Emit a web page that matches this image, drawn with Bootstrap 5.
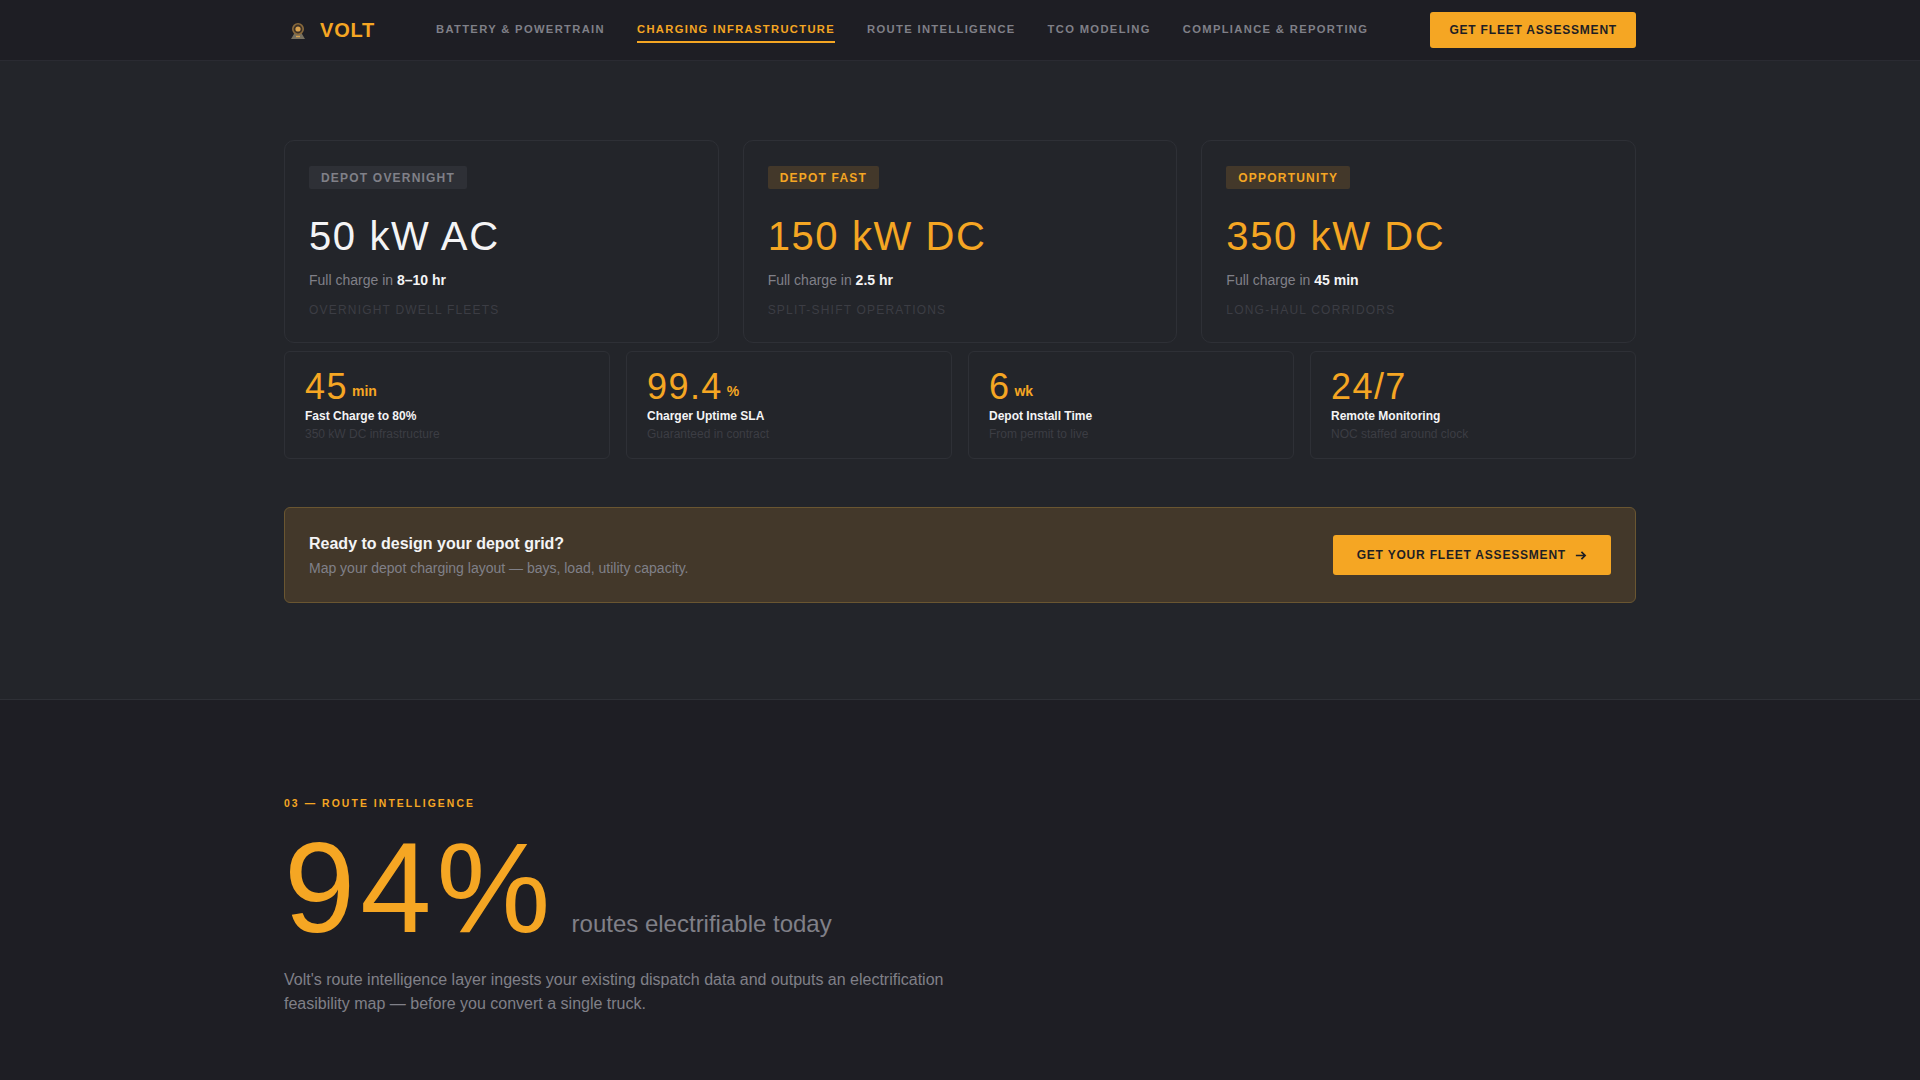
<!DOCTYPE html>
<html lang="en">
<head>
  <meta charset="UTF-8" />
  <meta name="viewport" content="width=device-width, initial-scale=1.0"/>
  <title>Volt</title>
  <link href="https://cdn.jsdelivr.net/npm/bootstrap@5.3.2/dist/css/bootstrap.min.css" rel="stylesheet" />
  <style>
    body {
      background: #1e1e24;
      font-family: "Liberation Sans", Arial, sans-serif;
      color: #fff;
    }
    .wrap {
      max-width: 1400px;
      margin: 0 auto;
      padding: 0 24px;
    }
    .topbar {
      height: 61px;
      background: #1e1e24;
      border-bottom: 1px solid #2a2b32;
    }
    .brand {
      width: 152px;
      color: #f5a623;
      font-size: 20px;
      font-weight: 700;
      letter-spacing: .8px;
      gap: 12px;
      padding-left: 4px;
    }
    .menu-link {
      color: #808088;
      font-size: 11.2px;
      font-weight: 700;
      letter-spacing: 1.344px;
      text-decoration: none;
      text-transform: uppercase;
      padding: 4px 0;
      border-bottom: 2px solid transparent;
    }
    .menu-link.on {
      color: #f5a623;
      border-bottom-color: #f5a623;
    }
    .top-links { gap: 32px; }
    .amber-btn {
      background: #f5a623;
      color: #1e1e24;
      font-weight: 700;
      font-size: 12px;
      line-height: 18px;
      letter-spacing: .8px;
      text-transform: uppercase;
      border: 0;
      border-radius: 3px;
    }
    .amber-btn:hover { background: #f5a623; color: #1e1e24; }
    .top-cta { padding: 9px 19px; }
    .strip-cta { padding: 11px 24px; }
    .charging-band {
      background: #23252a;
      border-bottom: 1px solid #2e3036;
      padding: 79px 0 96px;
    }
    .tier-grid {
      display: grid;
      grid-template-columns: repeat(3, 1fr);
      gap: 24px;
      margin-bottom: 8px;
    }
    .tier-card {
      border: 1px solid #2e3036;
      border-radius: 10px;
      padding: 25px 24px 24px;
      height: 203px;
    }
    .tier-tag {
      display: block;
      width: fit-content;
      font-size: 12px;
      line-height: 15px;
      font-weight: 700;
      letter-spacing: 1.2px;
      text-transform: uppercase;
      padding: 5px 12px 3px;
      border-radius: 2px;
      background: #2e3036;
      color: #808088;
    }
    .tier-tag.hot {
      background: #43382a;
      color: #f5a623;
    }
    .tier-power {
      font-size: 40px;
      line-height: 48px;
      letter-spacing: 1.6px;
      margin: 23px 0 10px;
      color: #f4f4f5;
    }
    .tier-power.hot { color: #f5a623; }
    .tier-time {
      font-size: 14px;
      line-height: 21px;
      color: #808088;
    }
    .tier-time b { color: #f4f4f5; }
    .tier-use {
      font-size: 12px;
      letter-spacing: 1.2px;
      text-transform: uppercase;
      color: #3c3d44;
      margin-top: 10px;
    }
    .stat-grid {
      display: grid;
      grid-template-columns: repeat(4, 1fr);
      gap: 16px;
    }
    .stat-box {
      border: 1px solid #2e3036;
      border-radius: 6px;
      padding: 15px 20px 0;
      height: 108px;
    }
    .stat-num {
      color: #f5a623;
      font-size: 36px;
      line-height: 39px;
      letter-spacing: 1.44px;
      margin-bottom: 1px;
    }
    .stat-unit {
      font-size: 14px;
      line-height: 1;
      font-weight: 700;
      letter-spacing: 0;
      margin-left: 4px;
      vertical-align: 3px;
    }
    .stat-name {
      font-size: 12px;
      line-height: 18px;
      font-weight: 700;
      color: #f4f4f5;
    }
    .stat-note {
      font-size: 12px;
      line-height: 18px;
      color: #3c3d44;
    }
    .cta-strip {
      margin-top: 48px;
      height: 96px;
      background: #43382a;
      border: 1px solid #6a5631;
      border-radius: 6px;
      padding: 0 24px;
    }
    .cta-title {
      font-size: 16px;
      font-weight: 700;
      line-height: 24px;
      color: #f4f4f5;
    }
    .cta-sub {
      font-size: 14px;
      line-height: 21px;
      margin-top: 2px;
      color: #808088;
    }
    .route-band {
      padding: 96px 0;
    }
    .eyebrow {
      color: #f5a623;
      font-size: 10.4px;
      font-weight: 700;
      letter-spacing: 2.08px;
      text-transform: uppercase;
      line-height: 15px;
      margin-bottom: 13px;
    }
    .big-num {
      color: #f5a623;
      font-size: 128px;
      line-height: 128px;
      letter-spacing: 5.12px;
    }
    .big-note {
      color: #808088;
      font-size: 24px;
    }
    .big-row { gap: 16px; }
    .route-copy {
      max-width: 680px;
      color: #808088;
      font-size: 16px;
      line-height: 24px;
      margin-top: 16px;
    }
  </style>
</head>
<body>
  <header class="topbar">
    <div class="wrap d-flex align-items-center h-100">
      <div class="brand d-flex align-items-center">
        <svg width="20" height="20" viewBox="0 0 20 20" aria-hidden="true">
          <path d="M6 14h8l3 5H3z" fill="#77705f"/>
          <circle cx="10" cy="9" r="6" fill="#8a6a3c"/>
          <circle cx="10" cy="9" r="4.4" fill="#3b3128"/>
          <circle cx="10" cy="9" r="2.6" fill="#d9a24e"/>
          <path d="M8 16.5h4" stroke="#d9a24e" stroke-width="1.4"/>
        </svg>
        <span>VOLT</span>
      </div>
      <nav class="d-flex align-items-center top-links flex-grow-1">
        <a class="menu-link" href="#">Battery &amp; Powertrain</a>
        <a class="menu-link on" href="#">Charging Infrastructure</a>
        <a class="menu-link" href="#">Route Intelligence</a>
        <a class="menu-link" href="#">TCO Modeling</a>
        <a class="menu-link" href="#">Compliance &amp; Reporting</a>
      </nav>
      <a class="btn amber-btn top-cta" href="#">Get Fleet Assessment</a>
    </div>
  </header>

  <section class="charging-band">
    <div class="wrap">
      <div class="tier-grid">
        <div class="tier-card">
          <span class="tier-tag">Depot Overnight</span>
          <div class="tier-power">50 kW AC</div>
          <div class="tier-time">Full charge in <b>8–10 hr</b></div>
          <div class="tier-use">Overnight dwell fleets</div>
        </div>
        <div class="tier-card">
          <span class="tier-tag hot">Depot Fast</span>
          <div class="tier-power hot">150 kW DC</div>
          <div class="tier-time">Full charge in <b>2.5 hr</b></div>
          <div class="tier-use">Split-shift operations</div>
        </div>
        <div class="tier-card">
          <span class="tier-tag hot">Opportunity</span>
          <div class="tier-power hot">350 kW DC</div>
          <div class="tier-time">Full charge in <b>45 min</b></div>
          <div class="tier-use">Long-haul corridors</div>
        </div>
      </div>
      <div class="stat-grid">
        <div class="stat-box">
          <div class="stat-num">45<span class="stat-unit">min</span></div>
          <div class="stat-name">Fast Charge to 80%</div>
          <div class="stat-note">350 kW DC infrastructure</div>
        </div>
        <div class="stat-box">
          <div class="stat-num">99.4<span class="stat-unit">%</span></div>
          <div class="stat-name">Charger Uptime SLA</div>
          <div class="stat-note">Guaranteed in contract</div>
        </div>
        <div class="stat-box">
          <div class="stat-num">6<span class="stat-unit">wk</span></div>
          <div class="stat-name">Depot Install Time</div>
          <div class="stat-note">From permit to live</div>
        </div>
        <div class="stat-box">
          <div class="stat-num">24/7</div>
          <div class="stat-name">Remote Monitoring</div>
          <div class="stat-note">NOC staffed around clock</div>
        </div>
      </div>
      <div class="cta-strip d-flex align-items-center justify-content-between">
        <div>
          <div class="cta-title">Ready to design your depot grid?</div>
          <div class="cta-sub">Map your depot charging layout — bays, load, utility capacity.</div>
        </div>
        <a class="btn amber-btn strip-cta d-flex align-items-center gap-2" href="#">
          Get Your Fleet Assessment
          <svg width="13" height="13" viewBox="0 0 14 14" fill="none" stroke="currentColor" stroke-width="1.8" aria-hidden="true"><path d="M2 7h10M8 3l4 4-4 4"/></svg>
        </a>
      </div>
    </div>
  </section>

  <section class="route-band">
    <div class="wrap">
      <div class="eyebrow">03 — Route Intelligence</div>
      <div class="d-flex align-items-baseline big-row">
        <span class="big-num">94%</span>
        <span class="big-note">routes electrifiable today</span>
      </div>
      <p class="route-copy">Volt's route intelligence layer ingests your existing dispatch data and outputs an electrification feasibility map — before you convert a single truck.</p>
    </div>
  </section>
</body>
</html>
